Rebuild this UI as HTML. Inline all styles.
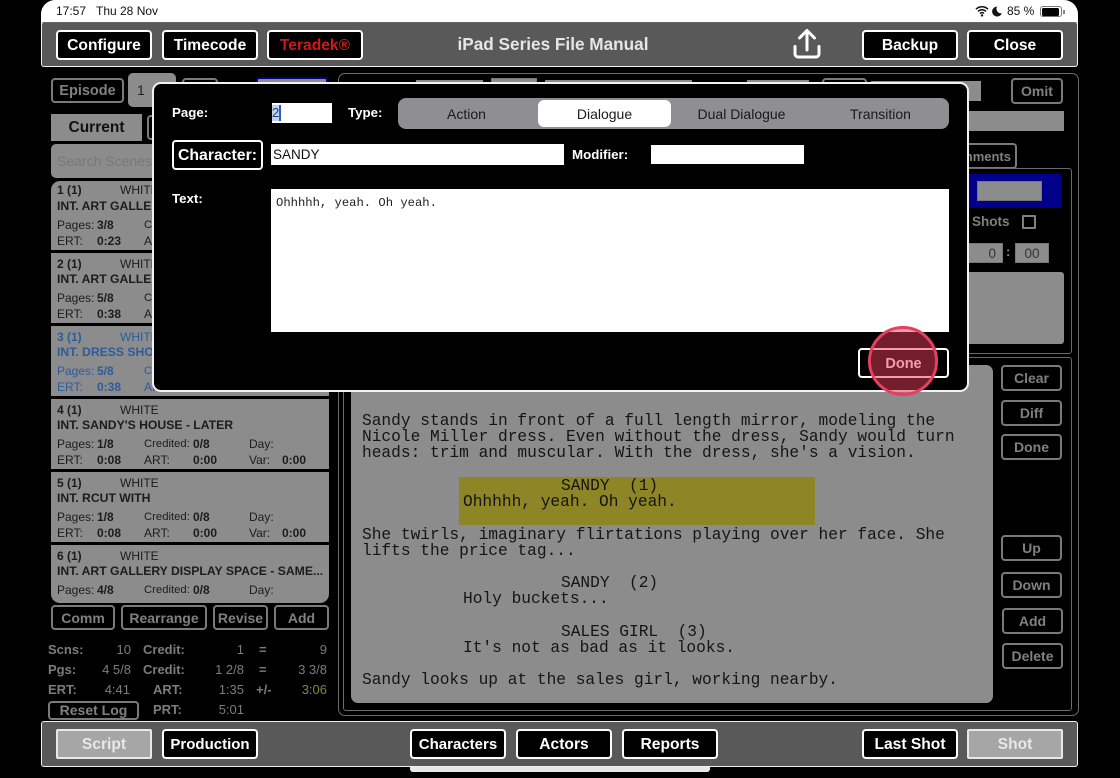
<!DOCTYPE html>
<html><head><meta charset="utf-8">
<style>
html,body{margin:0;padding:0;background:#000;width:1120px;height:778px;overflow:hidden}
body{position:relative;font-family:"Liberation Sans",sans-serif}
div,span.a{position:absolute;box-sizing:border-box;white-space:pre}
.b{background:#000;border:2px solid #fff;border-radius:4px;color:#fff;font-weight:bold;font-size:15.6px;display:flex;align-items:center;justify-content:center;height:30px;top:30px;width:96px;padding-top:1px}
.g{background:#000;border:2px solid #7a7a7a;border-radius:4px;color:#808080;font-weight:bold;font-size:14px;display:flex;align-items:center;justify-content:center;height:25px}
.f{background:#8c8c8c}
.t{font-size:12px;color:#1c1c1c;line-height:14px;height:14px}
.c{font-size:11.3px}
.v{font-weight:bold}
.h{font-size:12.2px}
.blue{color:#2c5c9c}
.sep{left:51px;width:278px;height:3px;background:#000}
.s{font-size:13px;line-height:16px;color:#7c7c7c}
.sb{font-weight:bold}
.r{text-align:right}
.m{font-family:"Liberation Mono",monospace;font-size:16.2px;line-height:16.2px;color:#151515}
.l{color:#fff;font-weight:bold;font-size:13.3px;line-height:16px}
.seg{font-size:14px;color:#1a1a1a;line-height:16px;text-align:center}
</style></head><body>

<!-- status bar -->
<div style="left:41px;top:0;width:1037px;height:30px;background:#fff;border-radius:14px 14px 0 0"></div>
<div style="left:56px;top:4px;font-size:12px;line-height:14px;color:#111">17:57</div>
<div style="left:96px;top:4px;font-size:12px;line-height:14px;color:#111">Thu 28 Nov</div>
<svg style="position:absolute;left:975px;top:5px" width="14" height="12" viewBox="0 0 14 12"><path d="M1 4.2a8.5 8.5 0 0 1 12 0M3 6.4a5.6 5.6 0 0 1 8 0M5 8.5a2.8 2.8 0 0 1 4 0" fill="none" stroke="#111" stroke-width="1.5"/><circle cx="7" cy="10.4" r="1.2" fill="#111"/></svg>
<svg style="position:absolute;left:992px;top:6px" width="10" height="11" viewBox="0 0 10 11"><path d="M5 .5A5 5 0 1 0 9.8 7.2 4.6 4.6 0 0 1 5 .5z" fill="#111"/></svg>
<div style="left:1007px;top:4px;font-size:12px;line-height:14px;color:#111">85 %</div>
<div style="left:1040px;top:6px;width:22px;height:11px;border:1px solid #777;border-radius:3px"></div>
<div style="left:1041.5px;top:7.5px;width:17px;height:8px;background:#000;border-radius:1.5px"></div>
<div style="left:1063px;top:9.5px;width:1.5px;height:4px;background:#888"></div>

<!-- top bar -->
<div style="left:41px;top:22px;width:1037px;height:45px;background:#595959;border:1.5px solid #f0f0f0;border-top-color:#666;border-radius:3px"></div>
<div class="b" style="left:56px">Configure</div>
<div class="b" style="left:162px">Timecode</div>
<div class="b" style="left:267px;color:#d01818">Teradek®</div>
<div style="left:353px;width:400px;top:34px;text-align:center;color:#e6e6e6;font-weight:bold;font-size:17.2px;line-height:20px">iPad Series File Manual</div>
<svg style="position:absolute;left:792px;top:27px" width="30" height="34" viewBox="0 0 30 34"><path d="M15 23V4M7.5 11L15 3.5 22.5 11M3 19.5V27a3 3 0 0 0 3 3H24a3 3 0 0 0 3-3V19.5" fill="none" stroke="#fff" stroke-width="3" stroke-linecap="round" stroke-linejoin="round"/></svg>
<div class="b" style="left:862px">Backup</div>
<div class="b" style="left:967px">Close</div>

<!-- left column -->
<div class="g" style="left:51px;top:78px;width:73px;height:25px;font-size:14.5px">Episode</div>
<div class="f" style="left:128px;top:73px;width:48px;height:34px;border-radius:5px;color:#222;font-size:14px;line-height:34px;padding-left:9px">1</div>
<div class="g" style="left:182px;top:78px;width:36px"></div>
<div class="f" style="left:256px;top:77px;width:72px;height:30px;border:2px solid #00008b;border-radius:3px"></div>
<div class="f" style="left:51px;top:114px;width:91px;height:27px;color:#111;font-weight:bold;font-size:15.5px;line-height:27px;text-align:center">Current</div>
<div class="g" style="left:147px;top:115px;width:60px"></div>
<div class="f" style="left:51px;top:144px;width:278px;height:34px;border-radius:5px;color:#787878;font-size:14px;line-height:34px;padding-left:6px">Search Scenes</div>

<!-- scene list -->
<div class="f" style="left:51px;top:181px;width:278px;height:422px;border-radius:9px"></div>
<div class="sep" style="top:250px"></div><div class="sep" style="top:323px"></div><div class="sep" style="top:396px"></div><div class="sep" style="top:469px"></div><div class="sep" style="top:542px"></div>

<div class="t v" style="left:57px;top:183px">1 (1)</div><div class="t" style="left:120px;top:183px">WHITE</div><div class="t v h" style="left:57px;top:199px">INT. ART GALLERY</div>
<div class="t" style="left:57px;top:218px">Pages:</div><div class="t v" style="left:97px;top:218px">3/8</div><div class="t c" style="left:144px;top:218px">Credited:</div>
<div class="t" style="left:57px;top:234px">ERT:</div><div class="t v" style="left:97px;top:234px">0:23</div><div class="t" style="left:144px;top:234px">ART:</div>

<div class="t v" style="left:57px;top:257px">2 (1)</div><div class="t" style="left:120px;top:257px">WHITE</div><div class="t v h" style="left:57px;top:272px">INT. ART GALLERY</div>
<div class="t" style="left:57px;top:291px">Pages:</div><div class="t v" style="left:97px;top:291px">5/8</div><div class="t c" style="left:144px;top:291px">Credited:</div>
<div class="t" style="left:57px;top:307px">ERT:</div><div class="t v" style="left:97px;top:307px">0:38</div><div class="t" style="left:144px;top:307px">ART:</div>

<div class="t v blue" style="left:57px;top:330px">3 (1)</div><div class="t blue" style="left:120px;top:330px">WHITE</div><div class="t v h blue" style="left:57px;top:345px">INT. DRESS SHOP</div>
<div class="t blue" style="left:57px;top:364px">Pages:</div><div class="t v blue" style="left:97px;top:364px">5/8</div><div class="t c blue" style="left:144px;top:364px">Credited:</div>
<div class="t blue" style="left:57px;top:380px">ERT:</div><div class="t v blue" style="left:97px;top:380px">0:38</div><div class="t blue" style="left:144px;top:380px">ART:</div>

<div class="t v" style="left:57px;top:403px">4 (1)</div><div class="t" style="left:120px;top:403px">WHITE</div><div class="t v h" style="left:57px;top:418px">INT. SANDY'S HOUSE - LATER</div>
<div class="t" style="left:57px;top:437px">Pages:</div><div class="t v" style="left:97px;top:437px">1/8</div><div class="t c" style="left:144px;top:437px">Credited:</div><div class="t v" style="left:193px;top:437px">0/8</div><div class="t" style="left:249px;top:437px">Day:</div>
<div class="t" style="left:57px;top:453px">ERT:</div><div class="t v" style="left:97px;top:453px">0:08</div><div class="t" style="left:144px;top:453px">ART:</div><div class="t v" style="left:193px;top:453px">0:00</div><div class="t" style="left:249px;top:453px">Var:</div><div class="t v" style="left:282px;top:453px">0:00</div>

<div class="t v" style="left:57px;top:476px">5 (1)</div><div class="t" style="left:120px;top:476px">WHITE</div><div class="t v h" style="left:57px;top:491px">INT. RCUT WITH</div>
<div class="t" style="left:57px;top:510px">Pages:</div><div class="t v" style="left:97px;top:510px">1/8</div><div class="t c" style="left:144px;top:510px">Credited:</div><div class="t v" style="left:193px;top:510px">0/8</div><div class="t" style="left:249px;top:510px">Day:</div>
<div class="t" style="left:57px;top:526px">ERT:</div><div class="t v" style="left:97px;top:526px">0:08</div><div class="t" style="left:144px;top:526px">ART:</div><div class="t v" style="left:193px;top:526px">0:00</div><div class="t" style="left:249px;top:526px">Var:</div><div class="t v" style="left:282px;top:526px">0:00</div>

<div class="t v" style="left:57px;top:549px">6 (1)</div><div class="t" style="left:120px;top:549px">WHITE</div><div class="t v h" style="left:57px;top:564px">INT. ART GALLERY DISPLAY SPACE - SAME...</div>
<div class="t" style="left:57px;top:583px">Pages:</div><div class="t v" style="left:97px;top:583px">4/8</div><div class="t c" style="left:144px;top:583px">Credited:</div><div class="t v" style="left:193px;top:583px">0/8</div><div class="t" style="left:249px;top:583px">Day:</div>

<div class="g" style="left:51px;top:605px;width:64px">Comm</div>
<div class="g" style="left:121px;top:605px;width:86px">Rearrange</div>
<div class="g" style="left:213px;top:605px;width:55px">Revise</div>
<div class="g" style="left:274px;top:605px;width:55px">Add</div>

<!-- stats -->
<div class="s sb" style="left:48px;top:642px">Scns:</div><div class="s r" style="left:90px;width:41px;top:642px">10</div><div class="s sb" style="left:143px;top:642px">Credit:</div><div class="s r" style="left:200px;width:44px;top:642px">1</div><div class="s sb" style="left:259px;top:642px">=</div><div class="s r" style="left:287px;width:40px;top:642px">9</div>
<div class="s sb" style="left:48px;top:662px">Pgs:</div><div class="s r" style="left:90px;width:41px;top:662px">4 5/8</div><div class="s sb" style="left:143px;top:662px">Credit:</div><div class="s r" style="left:200px;width:44px;top:662px">1 2/8</div><div class="s sb" style="left:259px;top:662px">=</div><div class="s r" style="left:287px;width:40px;top:662px">3 3/8</div>
<div class="s sb" style="left:48px;top:682px">ERT:</div><div class="s r" style="left:90px;width:40px;top:682px">4:41</div><div class="s sb" style="left:153px;top:682px">ART:</div><div class="s r" style="left:200px;width:44px;top:682px">1:35</div><div class="s sb" style="left:256px;top:682px">+/-</div><div class="s r" style="left:287px;width:40px;top:682px;color:#85853a">3:06</div>
<div class="g" style="left:48px;top:701px;width:91px;height:19px;padding-bottom:1px">Reset Log</div><div class="s sb" style="left:153px;top:702px">PRT:</div><div class="s r" style="left:200px;width:44px;top:702px">5:01</div>

<!-- right panel -->
<div style="left:338px;top:73px;width:741px;height:643px;border:1px solid #6a6a6a;border-radius:7px"></div>
<div class="f" style="left:416px;top:80px;width:67px;height:10px"></div>
<div class="f" style="left:491px;top:78px;width:46px;height:12px;border:1px solid #777"></div>
<div class="f" style="left:545px;top:80px;width:147px;height:10px"></div>
<div class="f" style="left:747px;top:80px;width:62px;height:10px"></div>
<div class="g" style="left:822px;top:78px;width:45px"></div>
<div class="f" style="left:871px;top:81px;width:110px;height:20px"></div>
<div class="g" style="left:1011px;top:78px;width:52px;height:26px">Omit</div>
<div class="f" style="left:900px;top:111px;width:164px;height:20px"></div>
<div class="g" style="left:940px;top:143px;width:77px;height:26px;justify-content:flex-end;padding-right:4px;font-size:13px">Attachments</div>
<div style="left:940px;top:168px;width:132px;height:186px;border:1px solid #6a6a6a;border-radius:3px"></div>
<div style="left:900px;top:174px;width:162px;height:34px;background:#00008b;border-radius:3px"></div>
<div class="f" style="left:977px;top:181px;width:65px;height:20px;border:1px solid #777"></div>
<div style="left:972px;top:214px;color:#808080;font-weight:bold;font-size:13.5px;line-height:16px">Shots</div>
<div style="left:1022px;top:215px;width:14px;height:14px;border:2px solid #808080;border-radius:1px"></div>
<div class="f r" style="left:960px;top:243px;width:43px;height:20px;border:1px solid #777;color:#333;font-size:13.5px;line-height:20px;padding-right:6px">0</div>
<div style="left:1006px;top:245px;color:#888;font-weight:bold;font-size:13px;line-height:14px">:</div>
<div class="f" style="left:1015px;top:243px;width:34px;height:20px;border:1px solid #777;color:#333;font-size:13.5px;line-height:19px;text-align:center">00</div>
<div class="f" style="left:900px;top:272px;width:164px;height:72px;border-radius:3px"></div>

<div style="left:343px;top:357px;width:729px;height:354px;border:1px solid #6a6a6a;border-radius:3px"></div>
<div class="f" style="left:351px;top:365px;width:642px;height:338px;border-radius:7px"></div>
<div style="left:459px;top:477px;width:356px;height:48px;background:#8d8526"></div>
<div class="m" style="left:362px;top:413px">Sandy stands in front of a full length mirror, modeling the
Nicole Miller dress. Even without the dress, Sandy would turn
heads: trim and muscular. With the dress, she's a vision.</div>
<div class="m" style="left:561px;top:478px">SANDY  (1)</div>
<div class="m" style="left:463px;top:494px">Ohhhhh, yeah. Oh yeah.</div>
<div class="m" style="left:362px;top:527px">She twirls, imaginary flirtations playing over her face. She
lifts the price tag...</div>
<div class="m" style="left:561px;top:575px">SANDY  (2)</div>
<div class="m" style="left:463px;top:591px">Holy buckets...</div>
<div class="m" style="left:561px;top:624px">SALES GIRL  (3)</div>
<div class="m" style="left:463px;top:640px">It's not as bad as it looks.</div>
<div class="m" style="left:362px;top:672px">Sandy looks up at the sales girl, working nearby.</div>

<div class="g" style="left:1001px;top:365px;width:61px;height:26px">Clear</div>
<div class="g" style="left:1001px;top:400px;width:61px;height:26px">Diff</div>
<div class="g" style="left:1001px;top:434px;width:61px;height:26px">Done</div>
<div class="g" style="left:1001px;top:535px;width:61px;height:26px">Up</div>
<div class="g" style="left:1001px;top:572px;width:61px;height:26px">Down</div>
<div class="g" style="left:1002px;top:608px;width:61px;height:26px">Add</div>
<div class="g" style="left:1002px;top:643px;width:61px;height:26px">Delete</div>

<!-- bottom bar -->
<div style="left:41px;top:721px;width:1037px;height:46px;background:#595959;border:1.5px solid #f0f0f0;border-radius:3px"></div>
<div class="b" style="left:56px;top:729px;background:#a6a6a6;color:#e8e8e8;border-color:#e8e8e8;border-radius:2px">Script</div>
<div class="b" style="left:162px;top:729px;font-size:15px">Production</div>
<div class="b" style="left:410px;top:729px;font-size:15px">Characters</div>
<div class="b" style="left:516px;top:729px">Actors</div>
<div class="b" style="left:622px;top:729px">Reports</div>
<div class="b" style="left:862px;top:729px">Last Shot</div>
<div class="b" style="left:967px;top:729px;background:#a6a6a6;color:#e8e8e8;border-color:#e8e8e8;border-radius:2px">Shot</div>
<div style="left:410px;top:767px;width:300px;height:5px;background:#e8e8e8;border-radius:0 0 3px 3px"></div>

<!-- modal -->
<div style="left:152px;top:82px;width:817px;height:310px;background:#000;border:2px solid #f2f2f2;border-radius:9px"></div>
<div class="l" style="left:172px;top:105px">Page:</div>
<div style="left:272px;top:103px;width:60px;height:20px;background:#fff;color:#222;font-size:13px;line-height:20px">2</div>
<div style="left:272px;top:105px;width:8px;height:16px;background:rgba(70,120,220,.35)"></div>
<div style="left:279px;top:105px;width:1.5px;height:16px;background:#2a5cd0"></div>
<div class="l" style="left:348px;top:105px">Type:</div>
<div style="left:398px;top:98px;width:551px;height:31px;background:#8e8e93;border-radius:8px"></div>
<div style="left:538px;top:100px;width:133px;height:27px;background:#fff;border-radius:6px"></div>
<div class="seg" style="left:398px;width:137px;top:106px">Action</div>
<div class="seg" style="left:538px;width:133px;top:106px">Dialogue</div>
<div class="seg" style="left:673px;width:137px;top:106px">Dual Dialogue</div>
<div class="seg" style="left:812px;width:137px;top:106px">Transition</div>
<div class="b" style="left:172px;top:140px;width:91px;height:30px;font-size:15.8px">Character:</div>
<div style="left:271px;top:144px;width:293px;height:21px;background:#fff;color:#111;font-size:13.5px;line-height:21px;padding-left:2px">SANDY</div>
<div class="l" style="left:572px;top:147px">Modifier:</div>
<div style="left:651px;top:145px;width:153px;height:19px;background:#fff"></div>
<div class="l" style="left:172px;top:191px">Text:</div>
<div style="left:271px;top:189px;width:678px;height:143px;background:#fff;font-family:'Liberation Mono',monospace;font-size:12.2px;line-height:14px;color:#222;padding:7px 5px">Ohhhhh, yeah. Oh yeah.</div>
<div class="b" style="left:858px;top:348px;width:91px;height:30px;font-size:14.5px">Done</div>

<!-- touch indicator -->
<div style="left:868px;top:326px;width:70px;height:70px;border-radius:50%;background:rgba(232,60,90,.5);border:3px solid #e4405f"></div>
</body></html>
